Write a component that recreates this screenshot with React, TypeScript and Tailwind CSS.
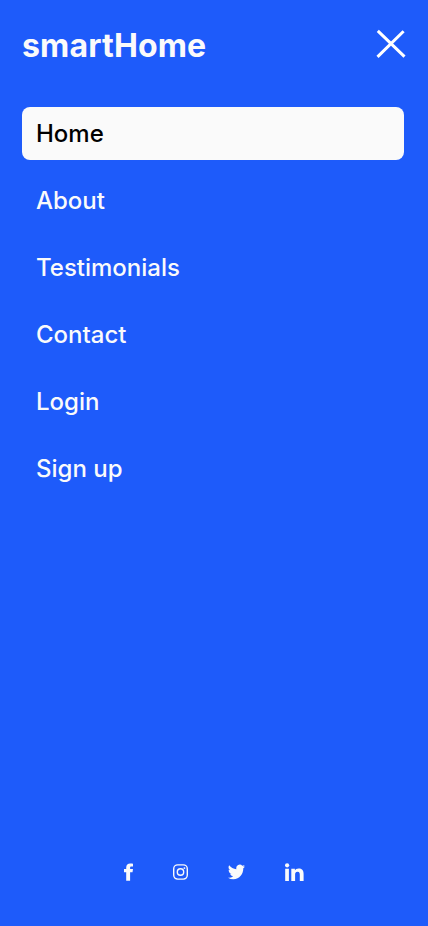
import React from "react";

const links = ["Home", "About", "Testimonials", "Contact", "Login", "Sign up"];

export default function App() {
  return (
    <div className="flex h-[926px] w-full flex-col bg-[#1e5bfa] font-['Inter',sans-serif] text-[#fafafa] antialiased">
      <header className="flex h-[65px] items-start justify-between pt-[26px] pr-[22px] pl-[22px]">
        <h1 className="text-[32px] leading-[40px] font-bold tracking-[0.15px]">smartHome</h1>
        <button aria-label="Close menu" className="mt-[3px]">
          <svg width="30" height="30" viewBox="0 0 30 30" fill="none" stroke="#fff" strokeWidth="3" strokeLinecap="butt">
            <path d="M1.8 1.8l26.7 25.9M27.6 2.3L1.5 27.9" />
          </svg>
        </button>
      </header>
      <nav className="mt-[42px] mr-6 ml-[22px] flex flex-col gap-[14px]">
        {links.map((link, i) => (
          <a
            key={link}
            className={
              i === 0
                ? "flex h-[53px] items-center rounded-[8px] bg-[#fafafa] px-[14px] text-2xl font-medium text-black"
                : "flex h-[53px] items-center rounded-[8px] px-[14px] text-2xl font-medium"
            }
          >
            {link}
          </a>
        ))}
      </nav>
      <footer className="mt-auto mb-[45px] ml-[124px] flex items-center">
        <svg width="9" height="18" viewBox="0 0 9 18" fill="#fafafa">
          <path d="M2.2 17.7V9.2H0V6.1h2.2V4.4C2.2 1.9 3.8.6 6.2.6 7.3.6 9 .8 9 .8v2.7H7.7C6.4 3.5 6.1 4 6.1 4.8v1.3H9l-.5 3.1H6.1v8.5z" />
        </svg>
        <svg className="ml-[40px]" width="15" height="16" viewBox="0 0 15 16" fill="none" stroke="#fafafa" strokeWidth="1.4">
          <rect x=".7" y=".9" width="13.6" height="14.2" rx="4" />
          <circle cx="7.5" cy="8" r="3.2" />
          <circle cx="11.4" cy="4.1" r=".95" fill="#fafafa" stroke="none" />
        </svg>
        <svg className="ml-[40px]" width="17" height="16" viewBox="0 1.4 24 21.2" preserveAspectRatio="none" fill="#fafafa">
          <path d="M23.95 4.57a10 10 0 0 1-2.82.77 4.96 4.96 0 0 0 2.16-2.72c-.95.56-2 .96-3.13 1.18a4.92 4.92 0 0 0-8.38 4.48C7.69 8.1 4.07 6.13 1.64 3.16a4.92 4.92 0 0 0 1.52 6.57 4.9 4.9 0 0 1-2.23-.61v.06a4.92 4.92 0 0 0 3.95 4.83 5 5 0 0 1-2.21.08 4.94 4.94 0 0 0 4.6 3.42A9.87 9.87 0 0 1 0 19.54a13.99 13.99 0 0 0 7.56 2.21c9.05 0 14-7.5 14-13.98 0-.21 0-.42-.02-.63a9.94 9.94 0 0 0 2.41-2.57z" />
        </svg>
        <svg className="ml-[40px]" width="19" height="18" viewBox="0 0 19 18" fill="#fafafa">
          <circle cx="2.1" cy="2.3" r="2.1" />
          <path d="M.2 5.8h3.7V18H.2zM6.3 5.8h3.6v1.6c.5-1 1.8-1.9 3.8-1.9 4 0 4.9 2.5 4.9 5.8V18h-3.8v-5.9c0-1.5 0-3.4-2.2-3.4s-2.5 1.6-2.5 3.3v6H6.3z" />
        </svg>
      </footer>
    </div>
  );
}
